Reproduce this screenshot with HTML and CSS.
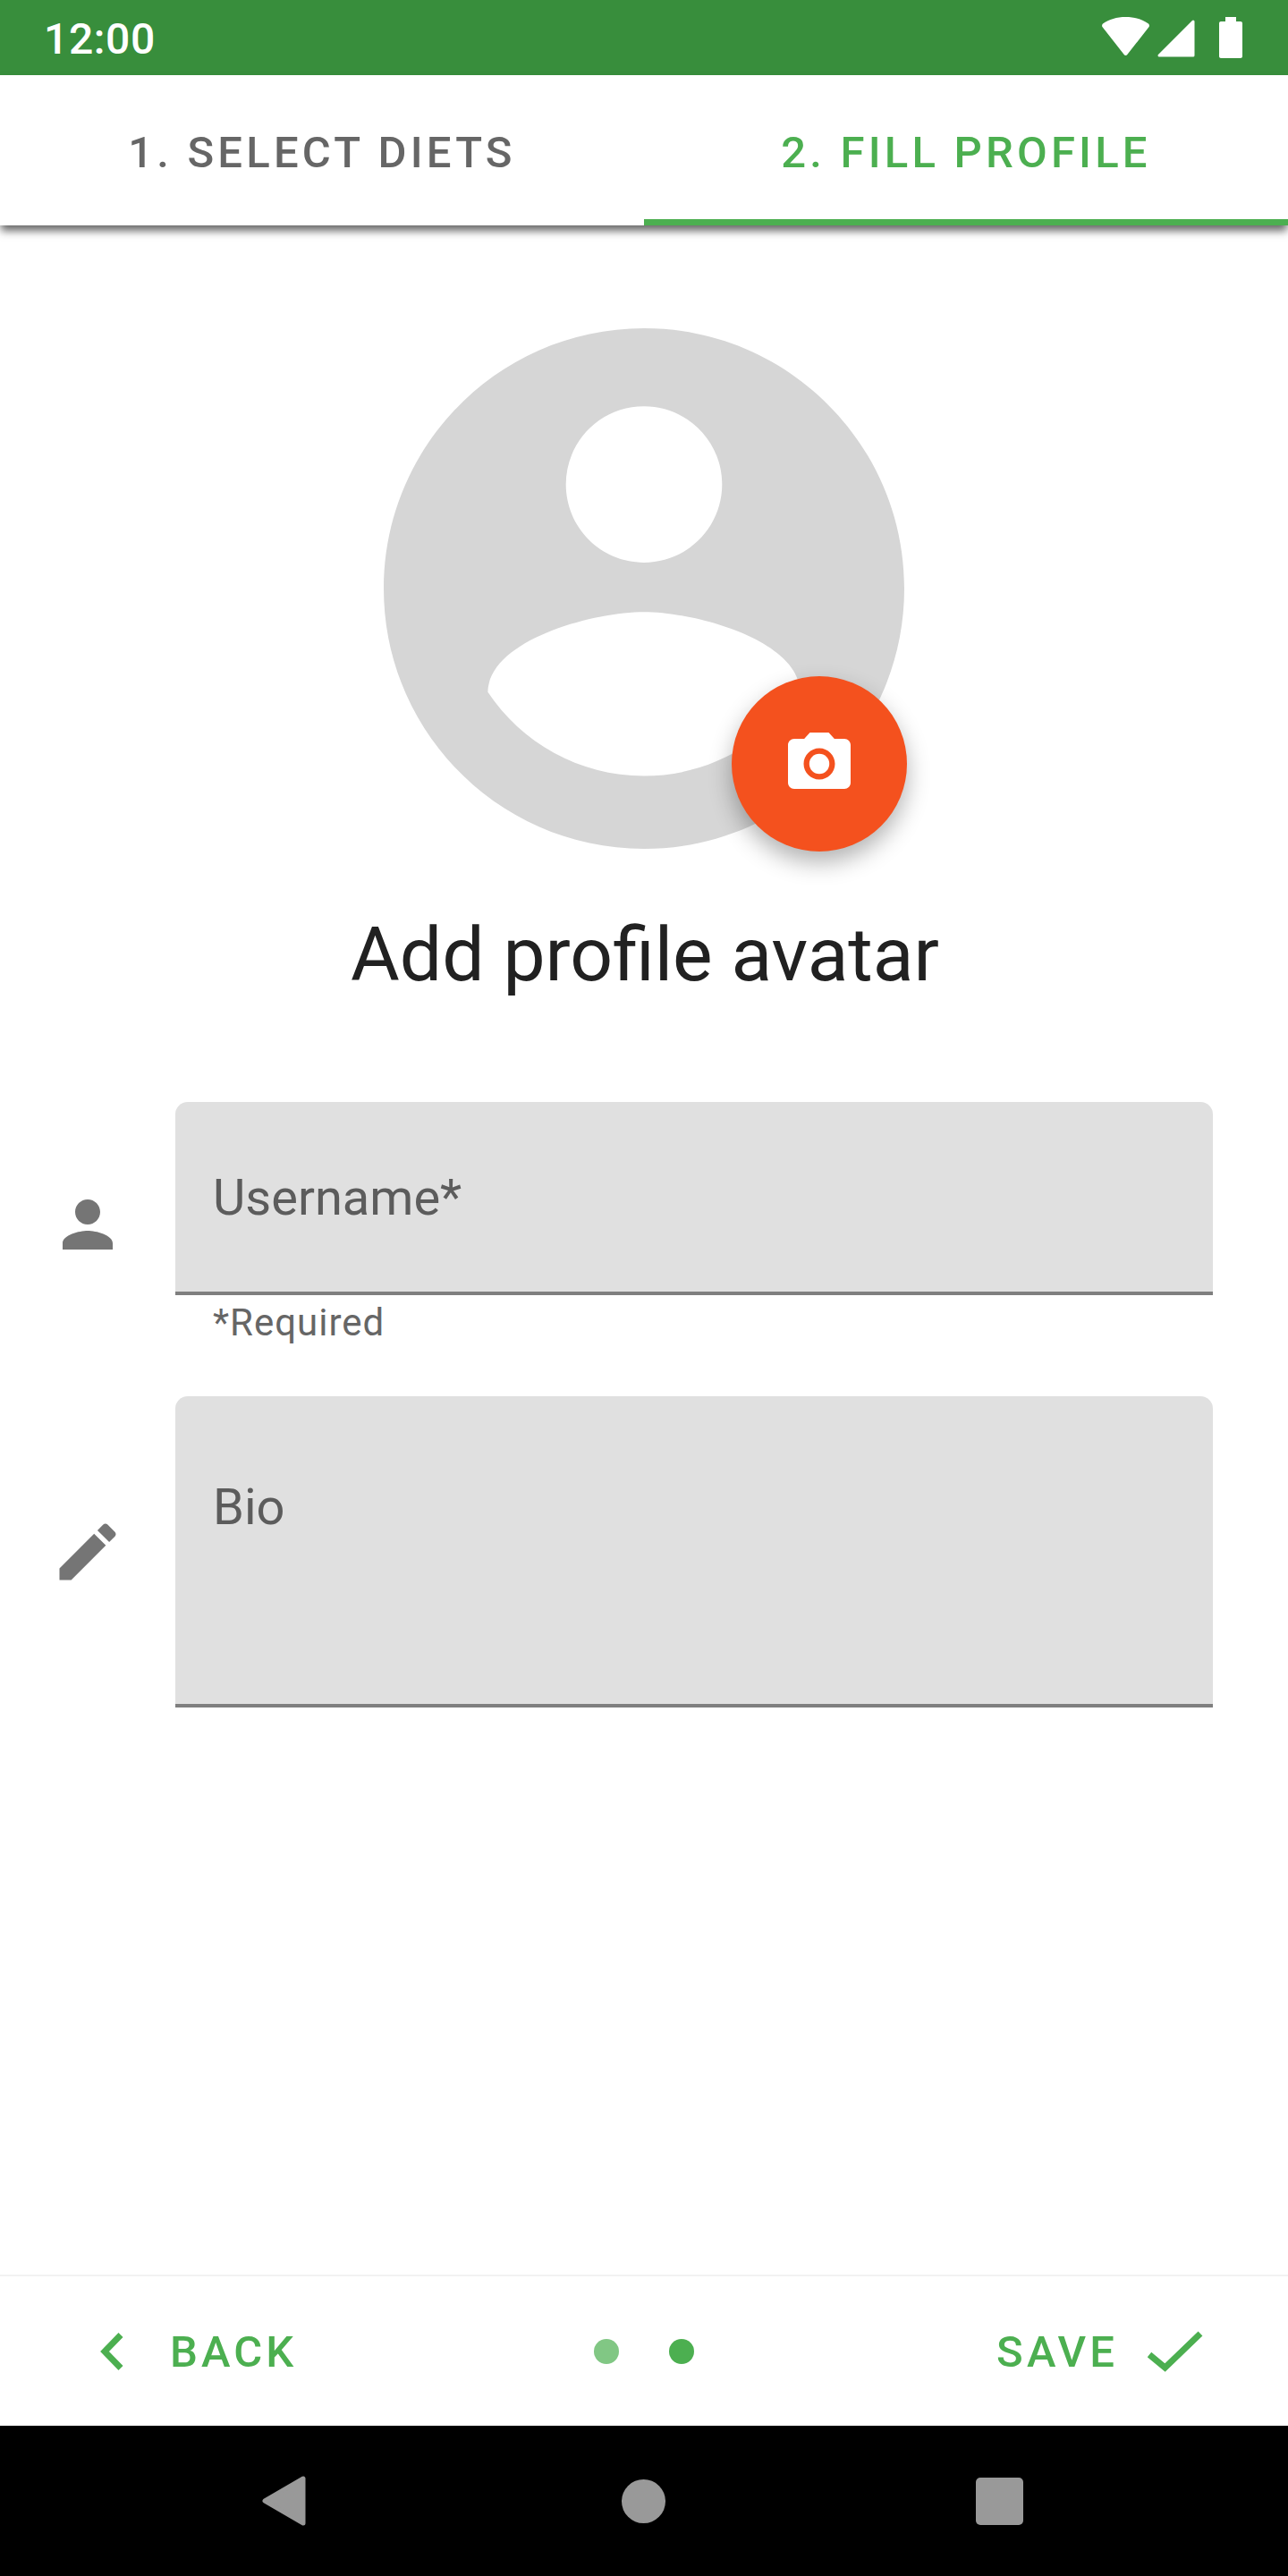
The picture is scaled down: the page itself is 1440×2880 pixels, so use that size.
FILE: index.html
```html
<!DOCTYPE html>
<html lang="en">
<head>
    <meta charset="UTF-8">
    <meta name="viewport" content="width=device-width, initial-scale=1.0">
    <title>Fill Profile</title>
    <link rel="stylesheet" href="styles.css">
</head>
<body>
    <div class="screen">
        <!-- Android status bar -->
        <div class="status-bar">
            <span class="clock">12:00</span>
            <div class="status-icons">
                <svg class="icon-wifi" width="53" height="43" viewBox="0 0 53 43"><path d="M1 7.500C8 2.500 16.500 0 26.500 0S45 2.500 52 7.500C53 8.500 53.200 9.800 52.600 11L28.300 42C27.500 43.300 25.500 43.300 24.700 42L.4 11C-.2 9.800 0 8.500 1 7.500z" fill="#fff"/></svg>
                <svg class="icon-signal" width="42" height="42" viewBox="0 0 42 42"><path d="M40 2V40H2z" fill="#fff" stroke="#fff" stroke-width="3" stroke-linejoin="round"/></svg>
                <svg class="icon-battery" width="26" height="46" viewBox="0 0 26 46"><path d="M7 0H19V5H24C25.100 5 26 5.900 26 7V44C26 45.100 25.100 46 24 46H2C.9 46 0 45.100 0 44V7C0 5.900 .9 5 2 5H7z" fill="#fff"/></svg>
            </div>
        </div>

        <!-- Steps -->
        <div class="tabs">
            <div class="tab">1. SELECT DIETS</div>
            <div class="tab tab-active">2. FILL PROFILE</div>
        </div>

        <div class="content">
            <div class="avatar">
                <svg width="582" height="582" viewBox="2 2 20 20"><path d="M12 2C6.480 2 2 6.480 2 12s4.480 10 10 10 10-4.480 10-10S17.520 2 12 2zm0 3c1.660 0 3 1.340 3 3s-1.340 3-3 3-3-1.340-3-3 1.340-3 3-3zm0 14.200c-2.500 0-4.710-1.280-6-3.220.03-1.990 4-3.080 6-3.080 1.990 0 5.970 1.090 6 3.080-1.290 1.940-3.500 3.220-6 3.220z" fill="#d6d6d6"/></svg>
                <div class="fab">
                    <svg width="84" height="84" viewBox="0 0 24 24"><circle cx="12" cy="12" r="3.200" fill="#fff"/><path d="M9 2L7.170 4H4c-1.100 0-2 .9-2 2v12c0 1.100.9 2 2 2h16c1.100 0 2-.9 2-2V6c0-1.100-.9-2-2-2h-3.170L15 2H9zm3 15c-2.760 0-5-2.240-5-5s2.240-5 5-5 5 2.240 5 5-2.240 5-5 5z" fill="#fff"/></svg>
                </div>
            </div>
            <h1 class="avatar-title">Add profile avatar</h1>

            <form class="profile-form">
                <div class="form-row">
                    <svg class="row-icon" width="84" height="84" viewBox="0 0 24 24"><path d="M12 12c2.210 0 4-1.790 4-4s-1.790-4-4-4-4 1.790-4 4 1.790 4 4 4zm0 2c-2.670 0-8 1.340-8 4v2h16v-2c0-2.660-5.330-4-8-4z"/></svg>
                    <div class="field-wrap">
                        <div class="field field-username">Username*</div>
                        <div class="helper">*Required</div>
                    </div>
                </div>
                <div class="form-row">
                    <svg class="row-icon" width="84" height="84" viewBox="0 0 24 24"><path d="M3 17.250V21h3.750L17.810 9.940l-3.750-3.750L3 17.250zM20.710 7.040c.39-.39.39-1.020 0-1.410l-2.340-2.340c-.39-.39-1.020-.39-1.410 0l-1.830 1.830 3.750 3.750 1.830-1.830z"/></svg>
                    <div class="field-wrap">
                        <div class="field field-bio">Bio</div>
                    </div>
                </div>
            </form>
        </div>

        <!-- Pager footer -->
        <div class="pager">
            <div class="pager-btn pager-back">
                <svg width="26" height="42" viewBox="0 0 26 42"><path d="M23 2.500L5 21l18 18.500" fill="none" stroke="#4caf50" stroke-width="7"/></svg>
                <span class="pager-label">BACK</span>
            </div>
            <div class="dots">
                <span class="dot dot-light"></span>
                <span class="dot"></span>
            </div>
            <div class="pager-btn pager-save">
                <span class="pager-label">SAVE</span>
                <svg width="62" height="46" viewBox="0 0 62 46"><path d="M2 26.500L19.500 41 59 3" fill="none" stroke="#4caf50" stroke-width="7"/></svg>
            </div>
        </div>

        <!-- Android nav bar -->
        <div class="nav-bar">
            <svg class="nav-back" width="49" height="56" viewBox="0 0 49 56"><path d="M46 3V53L3 28z" fill="#999" stroke="#999" stroke-width="5" stroke-linejoin="round"/></svg>
            <span class="nav-home"></span>
            <span class="nav-recent"></span>
        </div>
    </div>
</body>
</html>
```

FILE: styles.css
```css
* {
    margin: 0;
    padding: 0;
    box-sizing: border-box;
}

body {
    font-family: Roboto, sans-serif;
    background: #fff;
}

.screen {
    width: 1440px;
    height: 2880px;
    display: flex;
    flex-direction: column;
    overflow: hidden;
}

/* Status bar */
.status-bar {
    height: 84px;
    background-color: #388e3c;
    display: flex;
    justify-content: space-between;
    align-items: center;
    padding: 0 51px 0 49px;
    color: #fff;
}

.clock {
    font-size: 48px;
    font-weight: 500;
    letter-spacing: 0.6px;
    padding-top: 2px;
}

.status-icons {
    display: flex;
    align-items: flex-start;
    height: 46px;
}

.icon-signal {
    margin: 3px 0 0 9px;
}

.icon-battery {
    margin-left: 27px;
}

/* Tabs */
.tabs {
    display: flex;
    height: 168px;
    background: #fff;
    box-shadow: 0 7px 9px -1px rgba(0, 0, 0, 0.6);
    position: relative;
}

.tab {
    flex: 1;
    display: flex;
    justify-content: center;
    align-items: center;
    padding-top: 4px;
    font-size: 49px;
    font-weight: 500;
    letter-spacing: 4.2px;
    color: #666;
}

.tab-active {
    color: #4caf50;
    border-bottom: 7px solid #4caf50;
    padding-top: 11px;
}

/* Main content */
.content {
    flex: 1;
    display: flex;
    flex-direction: column;
    align-items: center;
    padding-top: 115px;
}

.avatar {
    width: 582px;
    height: 582px;
    position: relative;
}

.fab {
    position: absolute;
    left: 389px;
    top: 389px;
    width: 196px;
    height: 196px;
    border-radius: 50%;
    background-color: #f4511e;
    display: flex;
    justify-content: center;
    align-items: center;
    box-shadow: 0 12px 26px rgba(0, 0, 0, 0.3);
}

.avatar-title {
    font-size: 84px;
    font-weight: 400;
    line-height: 112px;
    color: #212121;
    margin-top: 63px;
    padding-left: 2px;
}

.profile-form {
    width: 100%;
    margin-top: 108px;
    padding: 0 84.500px 0 56px;
    display: flex;
    flex-direction: column;
    gap: 55px;
}

.form-row {
    display: flex;
    align-items: center;
}

.row-icon {
    fill: #757575;
    flex-shrink: 0;
}

.field-wrap {
    flex: 1;
    margin-left: 56px;
}

.field {
    background-color: #e0e0e0;
    border-bottom: 4px solid #7f7f7f;
    border-radius: 14px 14px 0 0;
    padding-left: 42px;
    font-size: 56px;
    color: #5c5c5c;
}

.field-username {
    height: 216px;
    line-height: 215px;
}

.field-bio {
    height: 348px;
    padding-top: 91px;
    line-height: 66px;
}

.helper {
    height: 58px;
    padding: 6px 0 0 42px;
    font-size: 42px;
    line-height: 50px;
    letter-spacing: 1px;
    color: #666;
}

/* Footer with back / save */
.pager {
    height: 169px;
    border-top: 2px solid #f2f2f2;
    display: grid;
    grid-template-columns: 1fr auto 1fr;
    align-items: center;
    padding: 0 95px;
}

.pager-btn {
    display: flex;
    align-items: center;
    font-size: 49px;
    font-weight: 500;
    letter-spacing: 4.1px;
    color: #4caf50;
}

.pager-label {
    padding-top: 2px;
}

.pager-back {
    gap: 52px;
    margin-left: 17px;
}

.pager-save {
    justify-content: flex-end;
    gap: 33px;
}

.dots {
    display: flex;
    gap: 56px;
}

.dot {
    width: 28px;
    height: 28px;
    border-radius: 50%;
    background-color: #4caf50;
}

.dot-light {
    background-color: #81c784;
}

/* Android nav bar */
.nav-bar {
    height: 168px;
    background: #000;
    display: flex;
    align-items: center;
    padding-left: 293px;
}

.nav-home {
    width: 49px;
    height: 49px;
    border-radius: 50%;
    background-color: #999;
    margin-left: 353px;
}

.nav-recent {
    width: 53px;
    height: 53px;
    border-radius: 5px;
    background-color: #999;
    margin-left: 347px;
}
```
